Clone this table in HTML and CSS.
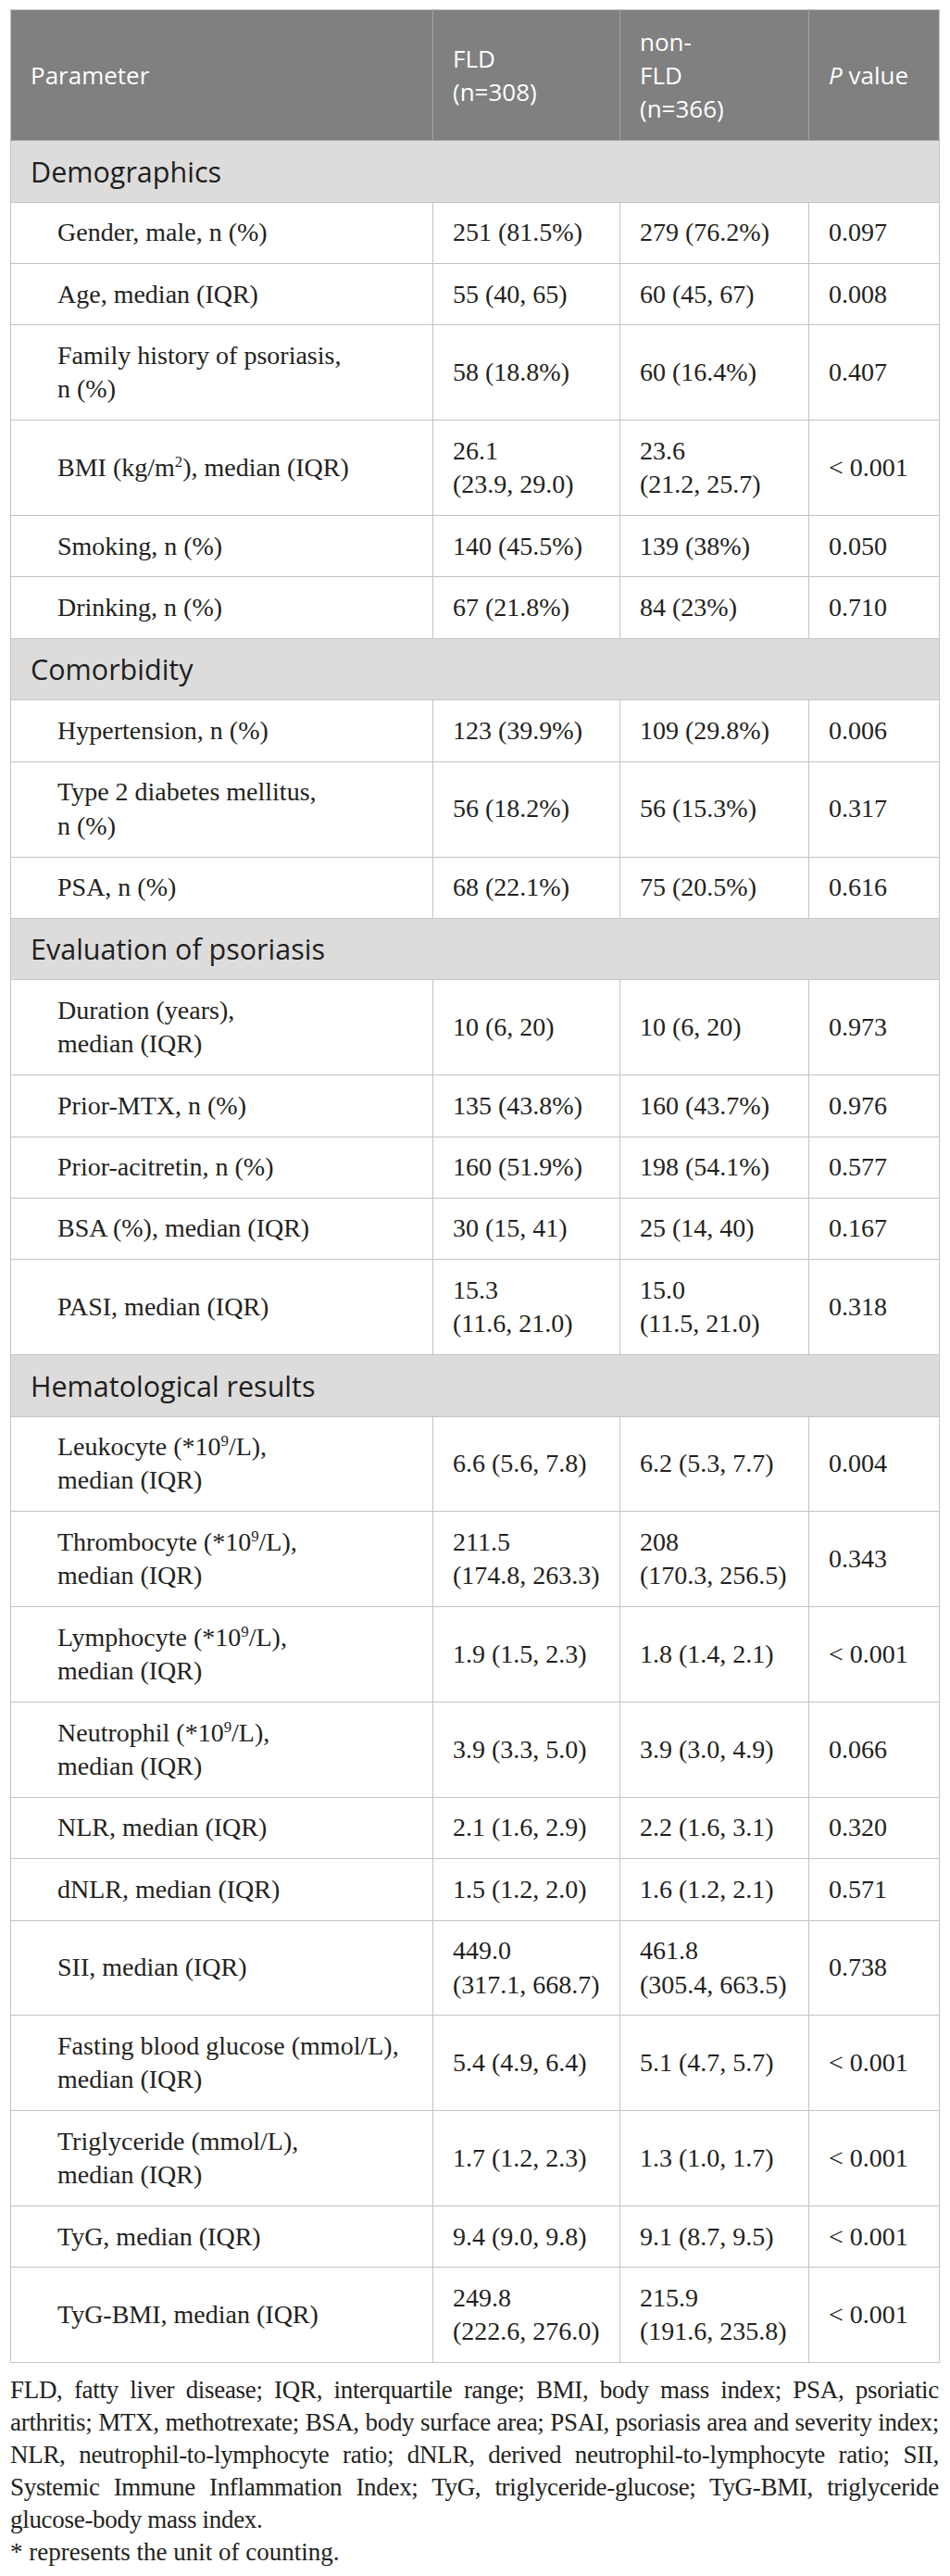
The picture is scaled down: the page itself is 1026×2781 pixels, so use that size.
FILE: index.html
```html
<!DOCTYPE html>
<html lang="en">
<head>
<meta charset="utf-8">
<title>Table</title>
<link rel="stylesheet" href="styles.css">
</head>
<body>
<div class="page">
  <table class="data">
    <colgroup>
      <col class="c1"><col class="c2"><col class="c3"><col class="c4">
    </colgroup>
    <thead>
      <tr>
        <th>Parameter</th>
        <th>FLD<br>(n=308)</th>
        <th>non-<br>FLD<br>(n=366)</th>
        <th><i>P</i> value</th>
      </tr>
    </thead>
    <tbody>
      <tr class="section"><td colspan="4">Demographics</td></tr>
      <tr><td class="lbl">Gender, male, n (%)</td><td>251 (81.5%)</td><td>279 (76.2%)</td><td>0.097</td></tr>
      <tr><td class="lbl">Age, median (IQR)</td><td>55 (40, 65)</td><td>60 (45, 67)</td><td>0.008</td></tr>
      <tr><td class="lbl">Family history of psoriasis,<br>n (%)</td><td>58 (18.8%)</td><td>60 (16.4%)</td><td>0.407</td></tr>
      <tr><td class="lbl">BMI (kg/m<sup>2</sup>), median (IQR)</td><td>26.1<br>(23.9, 29.0)</td><td>23.6<br>(21.2, 25.7)</td><td>&lt; 0.001</td></tr>
      <tr><td class="lbl">Smoking, n (%)</td><td>140 (45.5%)</td><td>139 (38%)</td><td>0.050</td></tr>
      <tr><td class="lbl">Drinking, n (%)</td><td>67 (21.8%)</td><td>84 (23%)</td><td>0.710</td></tr>

      <tr class="section"><td colspan="4">Comorbidity</td></tr>
      <tr><td class="lbl">Hypertension, n (%)</td><td>123 (39.9%)</td><td>109 (29.8%)</td><td>0.006</td></tr>
      <tr><td class="lbl">Type 2 diabetes mellitus,<br>n (%)</td><td>56 (18.2%)</td><td>56 (15.3%)</td><td>0.317</td></tr>
      <tr><td class="lbl">PSA, n (%)</td><td>68 (22.1%)</td><td>75 (20.5%)</td><td>0.616</td></tr>

      <tr class="section"><td colspan="4">Evaluation of psoriasis</td></tr>
      <tr><td class="lbl">Duration (years),<br>median (IQR)</td><td>10 (6, 20)</td><td>10 (6, 20)</td><td>0.973</td></tr>
      <tr><td class="lbl">Prior-MTX, n (%)</td><td>135 (43.8%)</td><td>160 (43.7%)</td><td>0.976</td></tr>
      <tr><td class="lbl">Prior-acitretin, n (%)</td><td>160 (51.9%)</td><td>198 (54.1%)</td><td>0.577</td></tr>
      <tr><td class="lbl">BSA (%), median (IQR)</td><td>30 (15, 41)</td><td>25 (14, 40)</td><td>0.167</td></tr>
      <tr><td class="lbl">PASI, median (IQR)</td><td>15.3<br>(11.6, 21.0)</td><td>15.0<br>(11.5, 21.0)</td><td>0.318</td></tr>

      <tr class="section"><td colspan="4">Hematological results</td></tr>
      <tr><td class="lbl">Leukocyte (*10<sup>9</sup>/L),<br>median (IQR)</td><td>6.6 (5.6, 7.8)</td><td>6.2 (5.3, 7.7)</td><td>0.004</td></tr>
      <tr><td class="lbl">Thrombocyte (*10<sup>9</sup>/L),<br>median (IQR)</td><td>211.5<br>(174.8, 263.3)</td><td>208<br>(170.3, 256.5)</td><td>0.343</td></tr>
      <tr><td class="lbl">Lymphocyte (*10<sup>9</sup>/L),<br>median (IQR)</td><td>1.9 (1.5, 2.3)</td><td>1.8 (1.4, 2.1)</td><td>&lt; 0.001</td></tr>
      <tr><td class="lbl">Neutrophil (*10<sup>9</sup>/L),<br>median (IQR)</td><td>3.9 (3.3, 5.0)</td><td>3.9 (3.0, 4.9)</td><td>0.066</td></tr>
      <tr><td class="lbl">NLR, median (IQR)</td><td>2.1 (1.6, 2.9)</td><td>2.2 (1.6, 3.1)</td><td>0.320</td></tr>
      <tr><td class="lbl">dNLR, median (IQR)</td><td>1.5 (1.2, 2.0)</td><td>1.6 (1.2, 2.1)</td><td>0.571</td></tr>
      <tr><td class="lbl">SII, median (IQR)</td><td>449.0<br>(317.1, 668.7)</td><td>461.8<br>(305.4, 663.5)</td><td>0.738</td></tr>
      <tr><td class="lbl">Fasting blood glucose (mmol/L),<br>median (IQR)</td><td>5.4 (4.9, 6.4)</td><td>5.1 (4.7, 5.7)</td><td>&lt; 0.001</td></tr>
      <tr><td class="lbl">Triglyceride (mmol/L),<br>median (IQR)</td><td>1.7 (1.2, 2.3)</td><td>1.3 (1.0, 1.7)</td><td>&lt; 0.001</td></tr>
      <tr><td class="lbl">TyG, median (IQR)</td><td>9.4 (9.0, 9.8)</td><td>9.1 (8.7, 9.5)</td><td>&lt; 0.001</td></tr>
      <tr><td class="lbl">TyG-BMI, median (IQR)</td><td>249.8<br>(222.6, 276.0)</td><td>215.9<br>(191.6, 235.8)</td><td>&lt; 0.001</td></tr>
    </tbody>
  </table>
  <div class="notes">
    <p class="abbr">
      <span class="ln">FLD, fatty liver disease; IQR, interquartile range; BMI, body mass index; PSA, psoriatic</span>
      <span class="ln">arthritis; MTX, methotrexate; BSA, body surface area; PSAI, psoriasis area and severity index;</span>
      <span class="ln">NLR, neutrophil-to-lymphocyte ratio; dNLR, derived neutrophil-to-lymphocyte ratio; SII,</span>
      <span class="ln">Systemic Immune Inflammation Index; TyG, triglyceride-glucose; TyG-BMI, triglyceride</span>
      <span class="ln last">glucose-body mass index.</span>
    </p>
    <p class="star">* represents the unit of counting.</p>
  </div>
</div>
</body>
</html>
```

FILE: styles.css
```css
html, body {
  margin: 0;
  padding: 0;
  background: #ffffff;
}

.page {
  padding: 10px 12px 0 11px;
  font-family: "Liberation Serif", "Times New Roman", serif;
  color: #231f20;
}

.data {
  width: 1003px;
  border-collapse: collapse;
  table-layout: fixed;
  border: 1px solid #c4c4c4;
}

.c1 { width: 456px; }
.c2 { width: 202px; }
.c3 { width: 204px; }
.c4 { width: 141px; }

.data th {
  background: #808080;
  color: #ffffff;
  font-family: "Open Sans", "Noto Sans", sans-serif;
  font-weight: 400;
  font-size: 26px;
  line-height: 36.4px;
  text-align: left;
  vertical-align: middle;
  padding: 15.5px 10px 15.5px 21px;
  border: 1px solid #a3a3a3;
  border-top-color: #c4c4c4;
  white-space: nowrap;
}

.data th:first-child { border-left-color: #c4c4c4; }
.data th:last-child { border-right-color: #c4c4c4; }

.data td {
  font-size: 28px;
  line-height: 36.4px;
  padding: 14.5px 8px 14.5px 21px;
  vertical-align: middle;
  border: 1px solid #c4c4c4;
  white-space: nowrap;
}

.data td.lbl {
  padding-left: 50px;
}

.section td {
  background: #dddcdb;
  font-family: "Open Sans", "Noto Sans", sans-serif;
  font-size: 30.5px;
  color: #1e1e1e;
  padding-left: 21px;
}

sup {
  font-size: 0.6em;
  line-height: 0;
  vertical-align: 0.6em;
}

.notes {
  margin-top: 12px;
  font-size: 27px;
  line-height: 35px;
}

.notes p {
  margin: 0;
}

.abbr .ln {
  display: block;
  white-space: nowrap;
  letter-spacing: -0.3px;
  text-align: justify;
  text-align-last: justify;
}

.abbr .ln.last {
  text-align-last: left;
}

.star {
  text-align: left;
}
```
